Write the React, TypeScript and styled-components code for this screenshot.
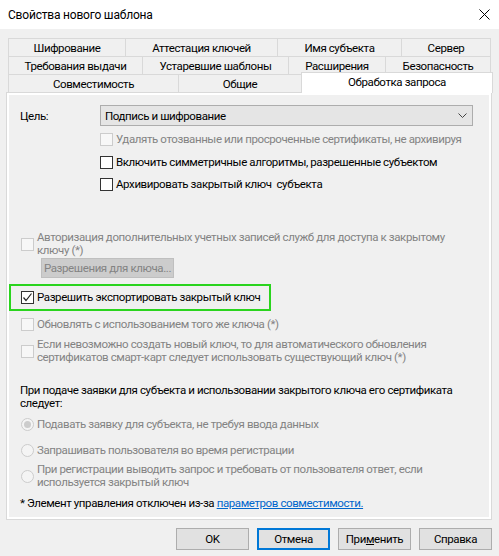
import styled, { createGlobalStyle, css } from 'styled-components';

const GlobalStyle = createGlobalStyle`
  html, body {
    margin: 0;
    padding: 0;
    background: #ffffff;
  }
  body {
    font-family: Roboto, 'Noto Sans', sans-serif;
    font-size: 11.5px;
    letter-spacing: -0.4px;
    color: #000;
  }
`;

const Window = styled.div`
  width: 499px;
  height: 556px;
  display: flex;
  flex-direction: column;
  background: #f0f0f0;
  overflow: hidden;
`;

const TitleBar = styled.div`
  height: 29px;
  flex: none;
  display: flex;
  align-items: center;
  justify-content: space-between;
  padding: 0 9px 0 8px;
  background: #ffffff;
  font-size: 12px;
  letter-spacing: -0.2px;
  line-height: 14px;
`;

const Body = styled.div`
  flex: 1;
  display: flex;
  flex-direction: column;
  padding: 9px 7px 0 6px;
`;

const TabStrip = styled.div`
  height: 54px;
  flex: none;
  margin-left: 2px;
  display: flex;
  flex-direction: column;
`;

const TabRow = styled.div`
  height: 18px;
  flex: none;
  display: flex;
`;

const Tab = styled.div<{ $w: number; $active?: boolean }>`
  width: ${({ $w }) => $w}px;
  height: 19px;
  flex: none;
  box-sizing: border-box;
  margin-right: -1px;
  display: flex;
  align-items: center;
  justify-content: center;
  border: 1px solid #d9d9d9;
  background: #f0f0f0;
  white-space: nowrap;
  line-height: 14px;

  ${({ $active }) =>
    $active &&
    css`
      position: relative;
      z-index: 1;
      height: 21px;
      margin-top: -2px;
      padding-bottom: 2px;
      border-bottom: none;
      background: #ffffff;
    `}
`;

const Panel = styled.div`
  height: 428px;
  flex: none;
  box-sizing: border-box;
  border: 1px solid #d9d9d9;
  box-shadow: inset 0 0 0 2px #ffffff;
  padding: 12px 12px 0 14px;
  display: flex;
  flex-direction: column;
`;

const Row = styled.div<{ $mt: number; $h: number; $indent?: number }>`
  height: ${({ $h }) => $h}px;
  margin-top: ${({ $mt }) => $mt}px;
  margin-left: ${({ $indent }) => $indent ?? 0}px;
  flex: none;
  display: flex;
  align-items: center;
`;

const FieldLabel = styled.span`
  width: 80px;
  margin-left: -1px;
  flex: none;
`;

const Combo = styled.div`
  width: 373px;
  height: 21px;
  box-sizing: border-box;
  display: flex;
  align-items: center;
  justify-content: space-between;
  padding: 0 5px 0 4px;
  background: #e5e5e5;
  border: 1px solid #adadad;
`;

const Box = styled.span<{ $disabled?: boolean }>`
  width: 13px;
  height: 13px;
  flex: none;
  box-sizing: border-box;
  display: flex;
  align-items: center;
  justify-content: center;
  margin-right: 3px;
  border: 1px solid ${({ $disabled }) => ($disabled ? '#cccccc' : '#333333')};
  background: ${({ $disabled }) => ($disabled ? '#f7f7f7' : '#ffffff')};
`;

const Round = styled(Box)`
  border-radius: 50%;
  border-color: #cccccc;
  background: #f4f4f4;
`;

const Dot = styled.span`
  width: 7px;
  height: 7px;
  border-radius: 50%;
  background: #cccccc;
`;

const Label = styled.span<{ $disabled?: boolean }>`
  line-height: 13px;
  white-space: nowrap;
  color: ${({ $disabled }) => ($disabled ? '#838383' : '#000000')};
`;

const PermButton = styled.div`
  width: 133px;
  height: 20px;
  box-sizing: border-box;
  display: flex;
  align-items: center;
  justify-content: center;
  background: #cccccc;
  border: 1px solid #bfbfbf;
  color: #838383;
  white-space: nowrap;
`;

const Highlight = styled.div`
  align-self: flex-start;
  height: 27px;
  margin-top: 6px;
  margin-left: -12px;
  box-sizing: border-box;
  display: flex;
  align-items: center;
  padding: 0 9px 0 10px;
  border: 2px solid #2ad41e;
`;

const Note = styled.div<{ $mt: number }>`
  margin-top: ${({ $mt }) => $mt}px;
  margin-left: -1px;
  line-height: 13px;
  white-space: nowrap;
`;

const Link = styled.a`
  color: #0066cc;
  text-decoration: underline;
`;

const ButtonBar = styled.div`
  display: flex;
  justify-content: flex-end;
  gap: 8px;
  padding-top: 8px;
`;

const Button = styled.div<{ $focused?: boolean }>`
  width: 73px;
  height: 22px;
  box-sizing: border-box;
  display: flex;
  align-items: center;
  justify-content: center;
  background: #e1e1e1;
  border: ${({ $focused }) => ($focused ? '2px solid #0078d7' : '1px solid #adadad')};
  white-space: nowrap;
`;

const Mnemonic = styled.span`
  text-decoration: underline;
`;

function CloseIcon() {
  return (
    <svg width="11" height="11" viewBox="0 0 11 11">
      <path d="M0.5 0.5 L10.5 10.5 M10.5 0.5 L0.5 10.5" stroke="#000" strokeWidth="1" fill="none" />
    </svg>
  );
}

function Chevron() {
  return (
    <svg width="9" height="5" viewBox="0 0 9 5">
      <path d="M0.5 0.5 L4.5 4.5 L8.5 0.5" stroke="#444" strokeWidth="1" fill="none" />
    </svg>
  );
}

function CheckMark() {
  return (
    <svg width="11" height="11" viewBox="0 0 11 11">
      <path d="M1.5 5.5 L4 8.5 L9.5 1.5" stroke="#222" strokeWidth="1.2" fill="none" />
    </svg>
  );
}

function Check({ disabled, checked, children }: { disabled?: boolean; checked?: boolean; children: React.ReactNode }) {
  return (
    <>
      <Box $disabled={disabled}>{checked && <CheckMark />}</Box>
      <Label $disabled={disabled}>{children}</Label>
    </>
  );
}

function Radio({ selected, children }: { selected?: boolean; children: React.ReactNode }) {
  return (
    <>
      <Round $disabled>{selected && <Dot />}</Round>
      <Label $disabled>{children}</Label>
    </>
  );
}

const rows: { label: string; w: number; active?: boolean }[][] = [
  [
    { label: 'Шифрование', w: 118 },
    { label: 'Аттестация ключей', w: 153 },
    { label: 'Имя субъекта', w: 125 },
    { label: 'Сервер', w: 90 },
  ],
  [
    { label: 'Требования выдачи', w: 135 },
    { label: 'Устаревшие шаблоны', w: 147 },
    { label: 'Расширения', w: 98 },
    { label: 'Безопасность', w: 106 },
  ],
  [
    { label: 'Совместимость', w: 171 },
    { label: 'Общие', w: 124 },
    { label: 'Обработка запроса', w: 192, active: true },
  ],
];

export default function App() {
  return (
    <>
      <GlobalStyle />
      <Window>
        <TitleBar>
          <span>Свойства нового шаблона</span>
          <CloseIcon />
        </TitleBar>
        <Body>
          <TabStrip>
            {rows.map((row, i) => (
              <TabRow key={i}>
                {row.map((t) => (
                  <Tab key={t.label} $w={t.w} $active={t.active}>
                    {t.label}
                  </Tab>
                ))}
              </TabRow>
            ))}
          </TabStrip>
          <Panel>
            <Row $mt={0} $h={21}>
              <FieldLabel>Цель:</FieldLabel>
              <Combo>
                <span>Подпись и шифрование</span>
                <Chevron />
              </Combo>
            </Row>
            <Row $mt={5} $h={16} $indent={79}>
              <Check disabled>Удалять отозванные или просроченные сертификаты, не архивируя</Check>
            </Row>
            <Row $mt={7} $h={16} $indent={79}>
              <Check>Включить симметричные алгоритмы, разрешенные субъектом</Check>
            </Row>
            <Row $mt={6} $h={16} $indent={79}>
              <Check>{'Архивировать закрытый ключ\u00a0 субъекта'}</Check>
            </Row>
            <Row $mt={39} $h={26}>
              <Check disabled>
                Авторизация дополнительных учетных записей служб для доступа к закрытому
                <br />
                ключу (*)
              </Check>
            </Row>
            <Row $mt={1} $h={20} $indent={20}>
              <PermButton>Разрешения для ключа...</PermButton>
            </Row>
            <Highlight>
              <Check checked>Разрешить экспортировать закрытый ключ</Check>
            </Highlight>
            <Row $mt={5} $h={16}>
              <Check disabled>Обновлять с использованием того же ключа (*)</Check>
            </Row>
            <Row $mt={6} $h={26}>
              <Check disabled>
                Если невозможно создать новый ключ, то для автоматического обновления
                <br />
                сертификатов смарт-карт следует использовать существующий ключ (*)
              </Check>
            </Row>
            <Note $mt={20}>
              При подаче заявки для субъекта и использовании закрытого ключа его сертификата
              <br />
              следует:
            </Note>
            <Row $mt={6} $h={16}>
              <Radio selected>Подавать заявку для субъекта, не требуя ввода данных</Radio>
            </Row>
            <Row $mt={10} $h={16}>
              <Radio>Запрашивать пользователя во время регистрации</Radio>
            </Row>
            <Row $mt={5} $h={26}>
              <Radio>
                При регистрации выводить запрос и требовать от пользователя ответ, если
                <br />
                используется закрытый ключ
              </Radio>
            </Row>
            <Note $mt={8}>
              * Элемент управления отключен из-за <Link>параметров совместимости.</Link>
            </Note>
          </Panel>
          <ButtonBar>
            <Button>OK</Button>
            <Button $focused>Отмена</Button>
            <Button>
              При<Mnemonic>м</Mnemonic>енить
            </Button>
            <Button>Справка</Button>
          </ButtonBar>
        </Body>
      </Window>
    </>
  );
}
